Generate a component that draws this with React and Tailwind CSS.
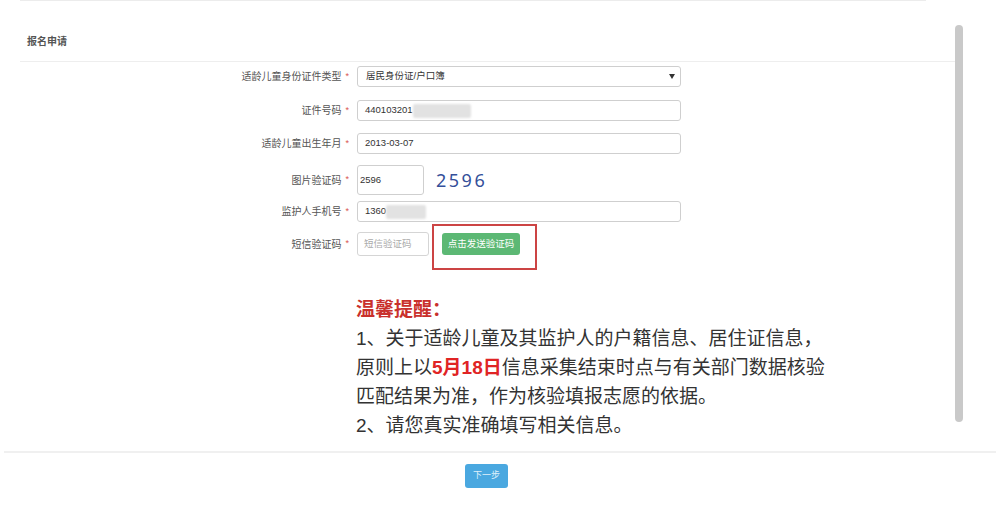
import React from "react";

const FONT = { fontFamily: '"Liberation Sans", "Noto Sans CJK SC", sans-serif' };

function Label({ children }) {
  return (
    <div className="w-[357px] shrink-0 flex justify-end items-center pr-[8px] text-[10px] text-[#555]">
      <span className="whitespace-nowrap">{children}</span>
      <span className="ml-[4px] text-[#d9534f] text-[9px]">*</span>
    </div>
  );
}

function Blur({ w }) {
  return <span className={`inline-block h-[14px] bg-[#e2e2e2] rounded-[2px] blur-[1px] ${w}`} />;
}

export default function App() {
  return (
    <div className="relative w-[1000px] h-[510px] bg-white overflow-hidden" style={FONT}>
      {/* top edge line */}
      <div className="ml-[20px] w-[906px] h-px bg-[#ececec]" />

      {/* header */}
      <div className="h-[60px] pl-[27px] pt-[27px]">
        <span className="text-[10px] font-bold text-[#555]">报名申请</span>
      </div>
      <div className="ml-[20px] w-[935px] h-px bg-[#eeeeee]" />

      {/* form */}
      <div className="flex flex-col">
        <div className="flex mt-[4px] h-[21px]">
          <Label>适龄儿童身份证件类型</Label>
          <div className="w-[324px] h-[21px] border border-[#cfcfcf] rounded-[3px] flex items-center justify-between pl-[8px] pr-[5px] text-[9.5px] text-[#333]">
            <span>居民身份证/户口簿</span>
            <svg width="6" height="5" viewBox="0 0 6 5"><path d="M0 0 L6 0 L3 5 Z" fill="#333" /></svg>
          </div>
        </div>

        <div className="flex mt-[13px] h-[21px]">
          <Label>证件号码</Label>
          <div className="w-[324px] h-[21px] border border-[#cfcfcf] rounded-[3px] flex items-center pl-[7px] text-[9.5px] text-[#333]">
            <span>440103201</span>
            <Blur w="w-[58px]" />
          </div>
        </div>

        <div className="flex mt-[12px] h-[21px]">
          <Label>适龄儿童出生年月</Label>
          <div className="w-[324px] h-[21px] border border-[#cfcfcf] rounded-[3px] flex items-center pl-[7px] text-[9.5px] text-[#333]">
            <span>2013-03-07</span>
          </div>
        </div>

        <div className="flex mt-[11px] h-[30px]">
          <Label>图片验证码</Label>
          <div className="w-[67px] h-[30px] border border-[#cfcfcf] rounded-[3px] flex items-center pl-[2px] text-[9.5px] text-[#333]">
            <span>2596</span>
          </div>
          <div
            className="ml-[12px] flex items-center text-[18px] tracking-[2.5px] text-[#34509a]"
            style={{ fontFamily: '"Noto Sans", sans-serif' }}
          >
            2596
          </div>
        </div>

        <div className="flex mt-[6px] h-[21px]">
          <Label>监护人手机号</Label>
          <div className="w-[324px] h-[21px] border border-[#cfcfcf] rounded-[3px] flex items-center pl-[7px] text-[9.5px] text-[#333]">
            <span>1360</span>
            <Blur w="w-[40px]" />
          </div>
        </div>

        <div className="flex mt-[10px] h-[24px]">
          <Label>短信验证码</Label>
          <div className="w-[72px] h-[24px] border border-[#d5d5d5] rounded-[3px] flex items-center pl-[6px] text-[9.5px] text-[#aaa]">
            <span>短信验证码</span>
          </div>
          <div className="relative ml-[13px]">
            <button className="h-[22px] mt-[1px] w-[78px] bg-[#5cb874] rounded-[3px] text-white text-[9.5px] flex items-center justify-center">
              点击发送验证码
            </button>
            <div className="absolute left-[-10px] top-[-8px] w-[105px] h-[46px] border-2 border-[#cc4444]" />
          </div>
        </div>

        {/* reminder */}
        <div className="ml-[356px] mt-[39px] text-[19px] leading-[29px] text-[#333] whitespace-nowrap">
          <div className="text-[#c9302c] font-bold">温馨提醒：</div>
          <div>1、关于适龄儿童及其监护人的户籍信息、居住证信息，</div>
          <div>
            原则上以<span className="text-[#e02424] font-bold">5月18日</span>信息采集结束时点与有关部门数据核验
          </div>
          <div>匹配结果为准，作为核验填报志愿的依据。</div>
          <div>2、请您真实准确填写相关信息。</div>
        </div>
      </div>

      {/* footer */}
      <div className="mx-[4px] mt-[11px] h-[2px] bg-[#f0f0f0]" />
      <div className="pl-[465px] mt-[11px]">
        <button className="w-[43px] h-[24px] bg-[#4aa8e0] rounded-[3px] text-[9px] text-[#dff0fb] flex items-center justify-center">
          下一步
        </button>
      </div>

      {/* scrollbar overlay */}
      <div className="absolute left-[955px] top-[25px] w-[8px] h-[397px] rounded-full bg-[#c9c9c9]" />
    </div>
  );
}
